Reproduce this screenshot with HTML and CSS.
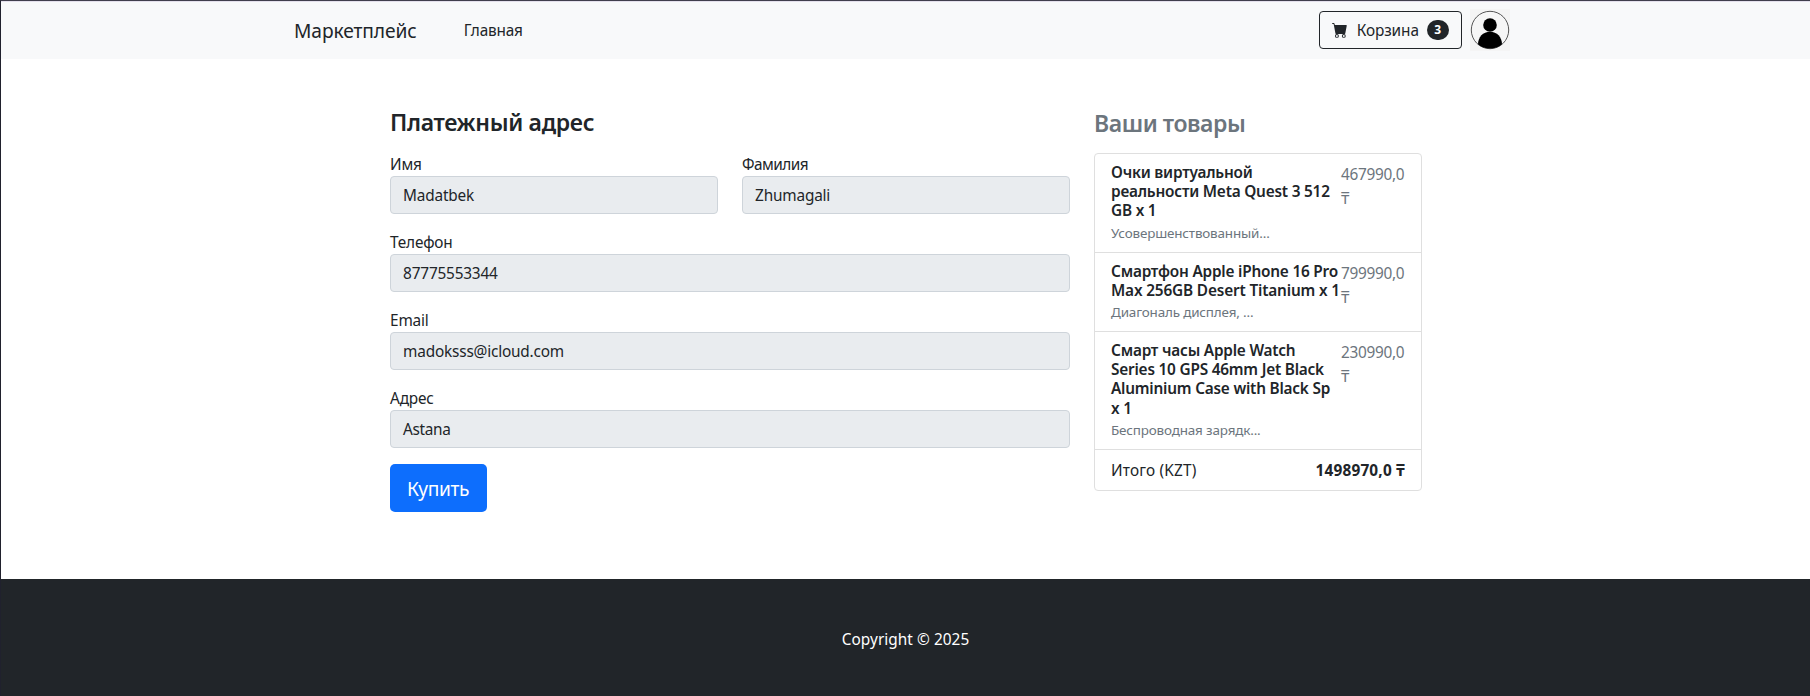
FILE: index.html
```html
<!DOCTYPE html>
<html lang="ru">
<head>
<meta charset="utf-8">
<title>Маркетплейс</title>
<link rel="stylesheet" href="styles.css">
</head>
<body>
<nav class="navbar">
  <div class="nav-inner">
    <a class="brand">Маркетплейс</a>
    <a class="nav-link">Главная</a>
    <button class="cart">
      <svg class="cart-icon" width="16" height="16" viewBox="0 0 16 16" fill="currentColor"><path d="M0 1.5A.5.5 0 0 1 .5 1H2a.5.5 0 0 1 .485.379L2.89 3H14.5a.5.5 0 0 1 .491.592l-1.5 8A.5.5 0 0 1 13 12H4a.5.5 0 0 1-.491-.408L2.01 3.607 1.61 2H.5a.5.5 0 0 1-.5-.5zM5 12a2 2 0 1 0 0 4 2 2 0 0 0 0-4zm7 0a2 2 0 1 0 0 4 2 2 0 0 0 0-4zm-7 1a1 1 0 1 1 0 2 1 1 0 0 1 0-2zm7 0a1 1 0 1 1 0 2 1 1 0 0 1 0-2z"/></svg>
      <span class="cart-text">Корзина</span>
      <span class="badge">3</span>
    </button>
    <svg class="avatar" width="40" height="42" viewBox="0 0 40 42">
      <defs><clipPath id="ring"><circle cx="20" cy="21" r="18.6"/></clipPath></defs>
      <rect width="40" height="42" fill="#f5f5f5"/>
      <circle cx="20" cy="21" r="18.7" fill="#f6f6f6" stroke="#444" stroke-width="0.9"/>
      <g clip-path="url(#ring)"><circle cx="20" cy="16" r="6.8"/><path d="M8 42V35.500C8 28 13 22.700 20 22.700S32 28 32 35.500V42Z"/></g>
    </svg>
  </div>
</nav>
<main class="checkout">
  <section class="billing">
    <h4 class="title">Платежный адрес</h4>
    <div class="fields">
      <div class="field"><label>Имя</label><div class="control">Madatbek</div></div>
      <div class="field"><label class="tight">Фамилия</label><div class="control">Zhumagali</div></div>
      <div class="field wide"><label>Телефон</label><div class="control">87775553344</div></div>
      <div class="field wide"><label>Email</label><div class="control">madoksss@icloud.com</div></div>
      <div class="field wide"><label>Адрес</label><div class="control address">Astana</div></div>
    </div>
    <button class="buy">Купить</button>
  </section>
  <aside class="summary">
    <h4 class="title muted">Ваши товары</h4>
    <ul class="list">
      <li><div class="product"><h6>Очки виртуальной<br>реальности Meta Quest 3 512<br>GB x 1</h6><small>Усовершенствованный...</small></div><span class="price">467990,0<br>₸</span></li>
      <li><div class="product"><h6>Смартфон Apple iPhone 16 Pro<br><span class="loose">Max 256GB Desert Titanium x 1</span></h6><small>Диагональ дисплея, ...</small></div><span class="price">799990,0<br>₸</span></li>
      <li><div class="product"><h6>Смарт часы Apple Watch<br>Series 10 GPS 46mm Jet Black<br>Aluminium Case with Black Sp<br>x 1</h6><small>Беспроводная зарядк...</small></div><span class="price">230990,0<br>₸</span></li>
      <li class="total"><span>Итого (KZT)</span><strong>1498970,0 ₸</strong></li>
    </ul>
  </aside>
</main>
<footer class="footer">Copyright © 2025</footer>
</body>
</html>
```
FILE: styles.css
```css
* { box-sizing: border-box; }
html { height: 100%; overflow: hidden; }
body {
  margin: 0;
  height: 100%;
  overflow: hidden;
  display: flex;
  flex-direction: column;
  border-top: 1px solid #403e4c;
  border-left: 1px solid #20212d;
  background: #fff;
  color: #212529;
  font: 15.36px/24px "Noto Sans", "Open Sans", sans-serif;
  letter-spacing: -0.19px;
}
h4, h6, ul { margin: 0; padding: 0; }
button { font: inherit; letter-spacing: inherit; color: inherit; }

.navbar {
  flex: none;
  height: 58px;
  background: #f8f9fa;
  border-top: 1px solid #e4e0ec;
}
.nav-inner {
  width: 1320px;
  height: 56px;
  margin: 0 auto;
  padding: 0 56px 0 48.5px;
  display: flex;
  align-items: center;
}
.brand { font-size: 19.2px; line-height: 30px; letter-spacing: -0.09px; margin-right: 47px; padding-top: 1px; }
.nav-link { flex: 1; padding-top: 1px; }
.cart {
  width: 143px;
  height: 38px;
  display: flex;
  align-items: center;
  padding: 0 12px;
  border: 1px solid #212529;
  border-radius: 4px;
  background: transparent;
}
.cart-icon { margin-right: 9px; }
.cart-text { letter-spacing: -0.09px; margin-right: 8px; padding: 1px 0 0 0.5px; }
.badge {
  width: 22px;
  height: 20px;
  border-radius: 11px;
  background: #212529;
  color: #fff;
  font-size: 12px;
  font-weight: 700;
  line-height: 20px;
  text-align: center;
}
.avatar { margin-left: 8px; flex: none; }

.checkout {
  flex: none;
  width: 1032px;
  height: 520px;
  margin: 0 auto;
  padding-top: 49px;
  display: grid;
  grid-template-columns: 680px 328px;
  gap: 24px;
}
.title {
  font-size: 23.04px;
  font-weight: 600;
  line-height: 29px;
  letter-spacing: -0.33px;
  margin-bottom: 15px;
  padding-left: 0.5px;
}
.muted { color: #6c757d; letter-spacing: -0.45px; padding-top: 1px; }
.fields {
  display: grid;
  grid-template-columns: 1fr 1fr;
  gap: 16px 24px;
}
.wide { grid-column: span 2; }
label { display: block; height: 24px; padding: 1px 0 0 0.6px; }
.tight { letter-spacing: -0.55px; }
.control {
  height: 38px;
  padding: 7px 12.6px 5px;
  border: 1px solid #ced4da;
  border-radius: 4px;
  background: #e9ecef;
}
.address { letter-spacing: -0.33px; }
.buy {
  width: 97px;
  height: 48px;
  margin-top: 16px;
  padding: 2px 0 0;
  border: 0;
  border-radius: 5px;
  background: #0d6efd;
  color: #fff;
  font-size: 19.2px;
  letter-spacing: -0.41px;
}

.list {
  list-style: none;
  border: 1px solid #dfdfdf;
  border-radius: 4px;
}
.list li {
  display: flex;
  justify-content: space-between;
  padding: 9px 15.5px 7px 16.5px;
  border-bottom: 1px solid #dfdfdf;
}
.list .total { border-bottom: 0; letter-spacing: 0.18px; }
.product { width: 230px; white-space: nowrap; }
h6 { font-size: 15.36px; font-weight: 600; line-height: 19.2px; letter-spacing: -0.21px; }
.loose { letter-spacing: -0.16px; }
small { display: block; color: #6c757d; font-size: 13.44px; line-height: 24px; letter-spacing: -0.16px; }
.price { width: 64px; color: #6c757d; letter-spacing: -0.3px; }

.footer {
  flex: 1;
  padding-top: 49px;
  background: #212529;
  color: #fff;
  text-align: center;
  letter-spacing: 0.06px;
}
```
